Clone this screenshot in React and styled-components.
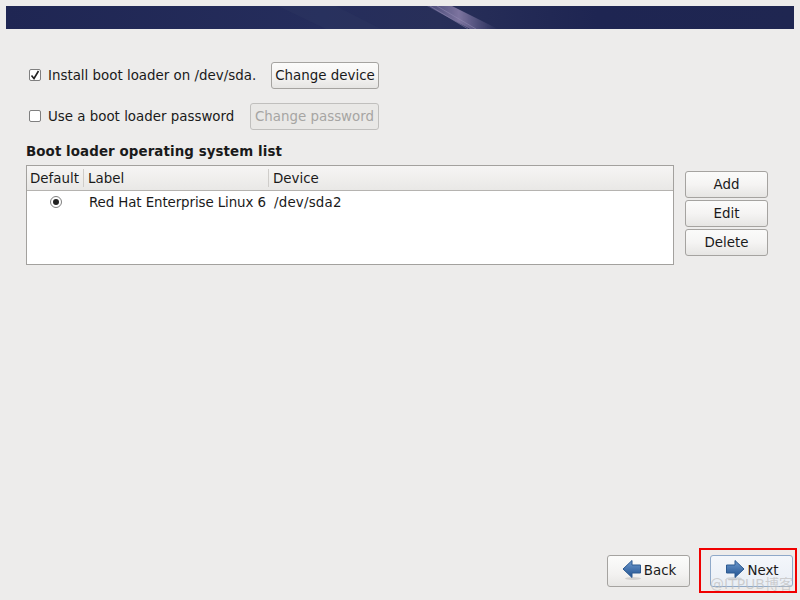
import React from "react";
import styled, { createGlobalStyle } from "styled-components";

const Global = createGlobalStyle`
  html, body { margin: 0; padding: 0; background: #edeceb; }
  * { box-sizing: border-box; }
`;

const Page = styled.div`
  width: 800px;
  height: 600px;
  position: relative;
  overflow: hidden;
  display: flex;
  flex-direction: column;
  padding: 6px 6px 0;
  background: #edeceb;
  color: #1a1a1a;
  font-family: "DejaVu Sans", sans-serif;
  font-size: 13.4px;
`;

const Banner = styled.svg`
  display: block;
  width: 788px;
  height: 23px;
  flex: none;
`;

const Content = styled.div`
  display: flex;
  flex-direction: column;
  padding: 33px 0 0 20px;
  width: 762px;
`;

const OptionRow = styled.div`
  display: flex;
  align-items: center;
  justify-content: space-between;
  width: 353px;
  height: 27px;
  margin-bottom: 14px;
`;

const CheckLabel = styled.label`
  display: flex;
  align-items: center;
  gap: 7px;
  padding-left: 3px;
  white-space: nowrap;
  height: 27px;
`;

const Box = styled.span`
  width: 12px;
  height: 12px;
  margin-bottom: 2px;
  border: 1px solid #7f7f7f;
  border-radius: 2px;
  background: #fff;
  display: flex;
  align-items: center;
  justify-content: center;
`;

const Button = styled.button`
  width: ${(p) => p.$w}px;
  height: ${(p) => p.$h}px;
  padding: 0 0 1px;
  border: 1px solid ${(p) => (p.disabled ? "#c0bfbd" : "#a5a3a0")};
  border-radius: 3px;
  background: ${(p) =>
    p.disabled
      ? "#e9e8e6"
      : "linear-gradient(#fbfbfa, #f5f4f3 50%, #e6e5e3)"};
  color: ${(p) => (p.disabled ? "#a6a5a3" : "#1a1a1a")};
  font: inherit;
  display: flex;
  align-items: center;
  justify-content: center;
`;

const Heading = styled.div`
  font-weight: 700;
  line-height: 17px;
  margin-top: -1px;
  margin-bottom: -1px;
  letter-spacing: 0.09px;
`;

const ListArea = styled.div`
  display: flex;
  align-items: flex-start;
  gap: 11px;
  margin-top: 6px;
`;

const Table = styled.div`
  width: 648px;
  height: 100px;
  border: 1px solid #a3a19e;
  background: #fff;
  flex: none;
`;

const HeaderRow = styled.div`
  display: grid;
  grid-template-columns: 57px 185px 1fr;
  height: 25px;
  background: linear-gradient(#f6f5f4, #e9e8e6);
  border-bottom: 1px solid #b5b3b0;
`;

const HeaderCell = styled.div`
  display: flex;
  align-items: center;
  padding-left: ${(p) => p.$pad}px;
  position: relative;
  &::after {
    content: "";
    display: ${(p) => (p.$last ? "none" : "block")};
    position: absolute;
    right: 0;
    top: 3px;
    bottom: 3px;
    width: 1px;
    background: #cfcdca;
  }
`;

const BodyRow = styled.div`
  display: grid;
  grid-template-columns: 57px 185px 1fr;
  height: 22px;
  align-items: center;
`;

const RadioCell = styled.div`
  display: flex;
  justify-content: center;
  padding-left: 1px;
`;

const Radio = styled.span`
  width: 12px;
  height: 12px;
  border: 1px solid #7f7f7f;
  border-radius: 50%;
  background: #fff;
  display: flex;
  align-items: center;
  justify-content: center;
  &::after {
    content: "";
    width: 6px;
    height: 6px;
    border-radius: 50%;
    background: #222;
  }
`;

const Cell = styled.div`
  padding-left: ${(p) => p.$pad}px;
  letter-spacing: ${(p) => p.$track}px;
  white-space: nowrap;
`;

const SideButtons = styled.div`
  display: flex;
  flex-direction: column;
  gap: 2px;
  margin-top: 6px;
`;

const Footer = styled.div`
  position: absolute;
  left: 607px;
  top: 555px;
  display: flex;
  gap: 20px;
`;

const NavButton = styled(Button)`
  gap: 2px;
  padding: 0 0 2px 1px;
  border-color: ${(p) => (p.$focus ? "#8fa9c9" : "#a5a3a0")};
  background: ${(p) =>
    p.$focus
      ? "linear-gradient(#f4f7fb, #e9eef5)"
      : "linear-gradient(#fcfcfb, #f3f2f1 60%, #e7e6e4)"};
`;

const Highlight = styled.div`
  position: absolute;
  left: 699px;
  top: 548px;
  width: 98px;
  height: 45px;
  border: 2px solid #f00000;
  pointer-events: none;
`;

const Watermark = styled.div`
  position: absolute;
  left: 710px;
  top: 576px;
  font-family: "DejaVu Sans", "Noto Sans CJK SC", sans-serif;
  font-size: 14px;
  line-height: 16px;
  color: rgba(190, 190, 190, 0.7);
  white-space: nowrap;
  pointer-events: none;
`;

const ArrowIcon = ({ left }) => (
  <svg width="20" height="22" viewBox="0 0 20 22" style={left ? undefined : { transform: "scaleX(-1)" }}>
    <defs>
      <linearGradient id="arr" x1="0" y1="0" x2="0" y2="1">
        <stop offset="0" stopColor="#6f9ace" />
        <stop offset="1" stopColor="#1f5190" />
      </linearGradient>
    </defs>
    <ellipse cx="11" cy="19.5" rx="8" ry="1.5" fill="#000" opacity="0.12" />
    <path d="M1 10 L10 1.5 V6 H18.5 V14 H10 V18.5 Z" fill="url(#arr)" stroke="#2c5a91" strokeWidth="1" strokeLinejoin="round" />
  </svg>
);

export default function App() {
  return (
    <Page>
      <Global />
      <Banner viewBox="0 0 788 23" preserveAspectRatio="none">
        <defs>
          <linearGradient id="bg" x1="0" x2="1" y1="0" y2="0">
            <stop offset="0" stopColor="#1f2653" />
            <stop offset="0.4" stopColor="#252d5c" />
            <stop offset="0.55" stopColor="#282f59" />
            <stop offset="0.75" stopColor="#1e2552" />
            <stop offset="1" stopColor="#1f2651" />
          </linearGradient>
          <linearGradient id="streak" x1="0" x2="1" y1="0" y2="0">
            <stop offset="0" stopColor="#6a6695" stopOpacity="0.5" />
            <stop offset="0.45" stopColor="#7d749f" />
            <stop offset="1" stopColor="#6a6695" stopOpacity="0" />
          </linearGradient>
          <filter id="soft"><feGaussianBlur stdDeviation="0.7" /></filter>
        </defs>
        <rect width="788" height="23" fill="url(#bg)" />
        <path d="M272 0 H330 L375 23 H320 Z" fill="#2c345f" opacity="0.6" />
        <g filter="url(#soft)">
          <path d="M421 0 H446 L492 23 H464 Z" fill="url(#streak)" />
          <path d="M424 0 L462 23 M431 0 L470 23" stroke="#948db5" strokeWidth="1" opacity="0.5" />
        </g>
      </Banner>
      <Content>
        <OptionRow>
          <CheckLabel>
            <Box>
              <svg width="10" height="10" viewBox="0 0 10 10">
                <path d="M1.5 5.5 L4 8.5 L8.5 1" fill="none" stroke="#222" strokeWidth="1.6" />
              </svg>
            </Box>
            Install boot loader on /dev/sda.
          </CheckLabel>
          <Button $w={108} $h={27}>Change device</Button>
        </OptionRow>
        <OptionRow>
          <CheckLabel>
            <Box />
            Use a boot loader password
          </CheckLabel>
          <Button $w={129} $h={27} disabled>Change password</Button>
        </OptionRow>
        <Heading>Boot loader operating system list</Heading>
        <ListArea>
          <Table>
            <HeaderRow>
              <HeaderCell $pad={3}>Default</HeaderCell>
              <HeaderCell $pad={4}>Label</HeaderCell>
              <HeaderCell $pad={4} $last>Device</HeaderCell>
            </HeaderRow>
            <BodyRow>
              <RadioCell><Radio /></RadioCell>
              <Cell $pad={5} $track={-0.1}>Red Hat Enterprise Linux 6</Cell>
              <Cell $pad={5} $track={0.2}>/dev/sda2</Cell>
            </BodyRow>
          </Table>
          <SideButtons>
            <Button $w={83} $h={27}>Add</Button>
            <Button $w={83} $h={27}>Edit</Button>
            <Button $w={83} $h={27}>Delete</Button>
          </SideButtons>
        </ListArea>
      </Content>
      <Footer>
        <NavButton $w={83} $h={32}><ArrowIcon left />Back</NavButton>
        <NavButton $w={83} $h={32} $focus><ArrowIcon />Next</NavButton>
      </Footer>
      <Highlight />
      <Watermark>@ITPUB博客</Watermark>
    </Page>
  );
}
